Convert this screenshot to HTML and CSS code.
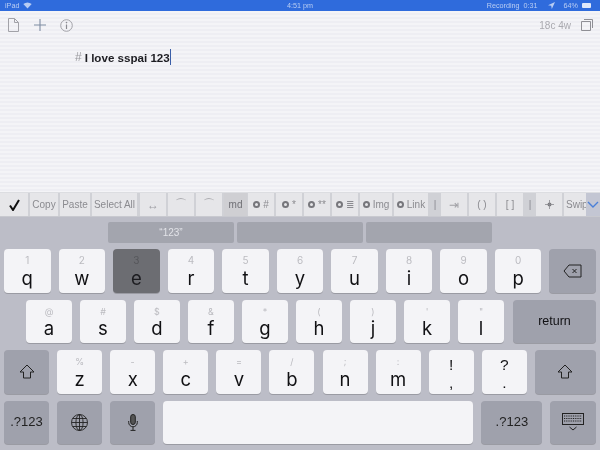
FILE: index.html
```html
<!DOCTYPE html>
<html lang="en">
  <head>
    <meta charset="UTF-8" />
    <title>Editor</title>
    <link rel="stylesheet" href="styles.css">
  </head>
  <body>
    <div id="status">
      <div class="st-left">
        <span>iPad</span>
        <svg width="9" height="7" viewBox="0 0 9 7"><path d="M4.5 6.5 L0.3 2 Q4.5 -1 8.7 2 Z" fill="#b9cdf3"/></svg>
      </div>
      <div class="st-time">4:51 pm</div>
      <div class="st-right">
        <span>Recording</span>
        <span class="st-rec">0:31</span>
        <svg class="st-loc" width="7" height="7" viewBox="0 0 7 7"><path d="M7 0 L0 3.2 L3.2 3.8 L3.8 7 Z" fill="#b9cdf3"/></svg>
        <span class="st-pct">64%</span>
        <div class="battery"></div>
      </div>
    </div>

    <div id="editor">
      <div id="topbar">
        <svg class="tool" width="11" height="14" viewBox="0 0 11 14"><path d="M0.5 0.5 H6.5 L10.5 4.5 V13.5 H0.5 Z M6.5 0.5 V4.5 H10.5" fill="none" stroke="#a2a2a8" stroke-width="1"/></svg>
        <svg class="tool tool-plus" width="12" height="12" viewBox="0 0 12 12"><path d="M6 0 V12 M0 6 H12" stroke="#7f8da3" stroke-width="1.1"/></svg>
        <svg class="tool" width="13" height="13" viewBox="0 0 13 13"><circle cx="6.5" cy="6.5" r="5.8" fill="none" stroke="#a2a2a8" stroke-width="1"/><path d="M6.5 5.5 V10" stroke="#8a8a90" stroke-width="1.2"/><circle cx="6.5" cy="3.6" r="0.8" fill="#8a8a90"/></svg>
        <div class="top-gap"></div>
        <span class="count">18c 4w</span>
        <svg width="12" height="12" viewBox="0 0 12 12"><path d="M0.5 2.5 H9.5 V11.5 H0.5 Z" fill="none" stroke="#8f8f95" stroke-width="1"/><path d="M3 0.5 H11.5 V9" fill="none" stroke="#8f8f95" stroke-width="1"/></svg>
      </div>
      <div class="line"><span class="hash">#</span><b>I love sspai 123</b><span class="caret"></span></div>
    </div>

    <div id="toolbar">
      <div class="tb w-check">
        <svg width="11" height="12" viewBox="0 0 11 12"><path d="M1 6.5 L4 11 L10 1" fill="none" stroke="#111" stroke-width="2"/></svg>
      </div>
      <div class="tb w-copy">Copy</div>
      <div class="tb w-paste">Paste</div>
      <div class="tb w-select">Select All</div>
      <div class="tb w-std faint">↔</div>
      <div class="tb w-std faint">⌒</div>
      <div class="tb w-std faint">⌒</div>
      <div class="tb w-md tb-dark">md</div>
      <div class="tb w-std"><span class="gear"></span>#</div>
      <div class="tb w-std"><span class="gear"></span>*</div>
      <div class="tb w-std"><span class="gear"></span>**</div>
      <div class="tb w-std"><span class="gear"></span>≣</div>
      <div class="tb w-img"><span class="gear"></span>Img</div>
      <div class="tb w-link"><span class="gear"></span>Link</div>
      <div class="tb w-sep">|</div>
      <div class="tb w-std faint">⇥</div>
      <div class="tb w-std">( )</div>
      <div class="tb w-std">[ ]</div>
      <div class="tb w-sep">|</div>
      <div class="tb w-std">
        <svg width="9" height="9" viewBox="0 0 9 9"><circle cx="4.5" cy="4.5" r="2" fill="#77777c"/><path d="M4.5 0 V9 M0 4.5 H9" stroke="#8b8b90" stroke-width="0.8"/></svg>
      </div>
      <div class="tb w-swipe">Swip</div>
      <div class="tb-hide">
        <svg width="12" height="7" viewBox="0 0 12 7"><path d="M1 1 L6 6 L11 1" fill="none" stroke="#4a7fd8" stroke-width="1.4"/></svg>
      </div>
    </div>

    <div id="keyboard">
      <div id="suggest">
        <div class="sug">“123”</div>
        <div class="sug"></div>
        <div class="sug"></div>
      </div>

      <div class="row">
        <div class="key"><small>1</small>q</div>
        <div class="key"><small>2</small>w</div>
        <div class="key key-on"><small>3</small>e</div>
        <div class="key"><small>4</small>r</div>
        <div class="key"><small>5</small>t</div>
        <div class="key"><small>6</small>y</div>
        <div class="key"><small>7</small>u</div>
        <div class="key"><small>8</small>i</div>
        <div class="key"><small>9</small>o</div>
        <div class="key"><small>0</small>p</div>
        <div class="key key-gray">
          <svg width="19" height="14" viewBox="0 0 19 14"><path d="M6 1 H18 V13 H6 L1 7 Z M9.5 5 L13.5 9 M13.5 5 L9.5 9" fill="none" stroke="#222" stroke-width="1"/></svg>
        </div>
      </div>

      <div class="row row-2">
        <div class="key"><small>@</small>a</div>
        <div class="key"><small>#</small>s</div>
        <div class="key"><small>$</small>d</div>
        <div class="key"><small>&amp;</small>f</div>
        <div class="key"><small>*</small>g</div>
        <div class="key"><small>(</small>h</div>
        <div class="key"><small>)</small>j</div>
        <div class="key"><small>'</small>k</div>
        <div class="key"><small>"</small>l</div>
        <div class="key key-gray key-return">return</div>
      </div>

      <div class="row row-3">
        <div class="key key-gray"><svg width="16" height="15" viewBox="0 0 16 15"><path d="M8 1 L15 8 H11.5 V14 H4.5 V8 H1 Z" fill="none" stroke="#222" stroke-width="1"/></svg></div>
        <div class="key"><small>%</small>z</div>
        <div class="key"><small>-</small>x</div>
        <div class="key"><small>+</small>c</div>
        <div class="key"><small>=</small>v</div>
        <div class="key"><small>/</small>b</div>
        <div class="key"><small>;</small>n</div>
        <div class="key"><small>:</small>m</div>
        <div class="key key-punct"><span>!</span><span>,</span></div>
        <div class="key key-punct"><span>?</span><span>.</span></div>
        <div class="key key-gray key-fill"><svg width="16" height="15" viewBox="0 0 16 15"><path d="M8 1 L15 8 H11.5 V14 H4.5 V8 H1 Z" fill="none" stroke="#222" stroke-width="1"/></svg></div>
      </div>

      <div class="row row-3">
        <div class="key key-gray key-num">.?123</div>
        <div class="key key-gray">
          <svg width="17" height="17" viewBox="0 0 17 17" fill="none" stroke="#222" stroke-width="0.9"><circle cx="8.5" cy="8.5" r="8"/><ellipse cx="8.5" cy="8.5" rx="3.6" ry="8"/><path d="M8.5 0.5 V16.5 M0.5 8.5 H16.5 M1.6 4.5 H15.4 M1.6 12.5 H15.4"/></svg>
        </div>
        <div class="key key-gray">
          <svg width="10" height="17" viewBox="0 0 10 17" fill="none" stroke="#222" stroke-width="1"><rect x="2.7" y="0.5" width="4.6" height="10" rx="2.3" fill="#555"/><path d="M0.7 7 V8.5 A4.3 4.3 0 0 0 9.3 8.5 V7 M5 13 V16 M2.5 16.4 H7.5"/></svg>
        </div>
        <div class="key key-space"></div>
        <div class="key key-gray key-num key-wide">.?123</div>
        <div class="key key-gray key-fill">
          <svg width="22" height="18" viewBox="0 0 22 18"><rect x="0.5" y="0.5" width="21" height="11" fill="none" stroke="#222" stroke-width="1"/><path d="M2 3 H20 M2 5.5 H20 M2 8 H20" stroke="#222" stroke-width="1.2" stroke-dasharray="1 0.8"/><path d="M7.5 14 L11 17 L14.5 14" fill="none" stroke="#222" stroke-width="1"/></svg>
        </div>
      </div>
    </div>
  </body>
</html>
```

FILE: styles.css
```css
* {
  box-sizing: border-box;
}
html {
  background-color: #bcbdc7;
}
html, body {
  margin: 0;
  padding: 0;
}
body {
  width: 600px;
  height: 450px;
  overflow: hidden;
  font-family: "Liberation Sans", Arial, sans-serif;
  background-color: #bcbdc7;
  filter: blur(0.35px);
}
#status {
  height: 11px;
  background-color: #2f6bdc;
  color: #b9cdf3;
  font-size: 7.2px;
  display: flex;
  align-items: center;
  justify-content: space-between;
  padding: 0 5px;
}
.st-left, .st-right {
  display: flex;
  align-items: center;
  gap: 4px;
}
.st-left {
  width: 210px;
}
.st-right {
  width: 210px;
  justify-content: flex-end;
  padding-right: 4px;
}
.st-loc {
  margin: 0 5px 0 6px;
}
.battery {
  width: 9px;
  height: 5px;
  background-color: #dfe8fa;
  border-radius: 1px;
}
#editor {
  height: 181px;
  background-color: #f2f2f6;
  background-image: repeating-linear-gradient(to bottom, #f4f4f7 0, #f4f4f7 2px, #eeeef3 2px, #eeeef3 4px);
  padding-top: 7px;
}
#topbar {
  height: 14px;
  display: flex;
  align-items: center;
  padding: 0 7px 0 8px;
}
.tool {
  margin-right: 15px;
}
.tool-plus {
  margin-right: 14px;
}
.top-gap {
  flex: 1;
}
.count {
  font-size: 10px;
  color: #a9a9af;
  margin-right: 10px;
}
.line {
  margin: 17px 0 0 75px;
  font-size: 11.6px;
  color: #1d1d22;
  display: flex;
  align-items: center;
  white-space: pre;
  height: 16px;
}
.hash {
  color: #9a9a9f;
  font-size: 12px;
  margin-right: 3px;
}
.caret {
  width: 1px;
  height: 16px;
  background-color: #3b5fa8;
}
#toolbar {
  height: 25px;
  background-color: #d0d1d6;
  border-top: 1px solid #dcdde1;
  border-bottom: 1px solid #c8c9cf;
  display: flex;
  color: #8b8b90;
  font-size: 10px;
}
.tb {
  background-color: #e6e6e9;
  margin-right: 2px;
  display: flex;
  align-items: center;
  justify-content: center;
  white-space: nowrap;
  overflow: hidden;
}
.tb-dark {
  background-color: #cfcfd3;
  margin-right: 1px;
  color: #6f6f75;
}
.w-check { width: 28px; }
.w-copy { width: 28px; }
.w-paste { width: 30px; }
.w-select { width: 45px; margin-right: 3px; }
.w-std { width: 26px; }
.w-md { width: 23px; }
.w-img { width: 32px; }
.w-link { width: 34px; }
.w-sep { width: 10px; background-color: transparent; margin-right: 1px; }
.w-swipe { width: 22px; justify-content: flex-start; padding-left: 2px; margin-right: 0; }
.faint {
  color: #a0a0a5;
  font-size: 12px;
}
.gear {
  display: inline-block;
  width: 7px;
  height: 7px;
  border: 2px solid #77777c;
  border-radius: 50%;
  margin-right: 3px;
}
.tb-hide {
  flex: 1;
  background-color: #c3c6d3;
  display: flex;
  align-items: center;
  justify-content: center;
}
#keyboard {
  padding-top: 5px;
}
#suggest {
  display: flex;
  gap: 3px;
  padding-left: 108px;
  margin-bottom: 6px;
}
.sug {
  width: 126px;
  height: 21px;
  background-color: #a3a5ae;
  border-radius: 2px;
  color: #e2e3e8;
  font-size: 10px;
  display: flex;
  align-items: center;
  justify-content: center;
}
.row {
  display: flex;
  gap: 8px;
  padding: 0 4px;
  margin-bottom: 7px;
}
.key {
  flex: 1;
  height: 43.5px;
  padding-top: 6px;
  background-color: #f4f4f7;
  border-radius: 4px;
  box-shadow: 0 1px 0 #9a9ba3;
  color: #111114;
  font-family: Inter, "Liberation Sans", sans-serif;
  font-size: 18.5px;
  line-height: 20px;
  display: flex;
  flex-direction: column;
  align-items: center;
}
.key small {
  font-size: 10px;
  line-height: 11px;
  margin-bottom: 1.5px;
  color: #bbbbc0;
}
.key-on {
  background-color: #6c6d72;
  color: #1c1c20;
}
.key-on small {
  color: #55565a;
}
.key-gray {
  background-color: #9fa1ac;
  padding-top: 0;
  justify-content: center;
}
.row-2 {
  padding-left: 26px;
}
.row-2 .key {
  flex: 0 0 46px;
}
.row-2 small, .row-3 small {
  font-size: 9px;
}
.row-2 .key-return {
  flex: 1;
  margin-left: 1px;
  font-family: "Liberation Sans", sans-serif;
  font-size: 12.5px;
}
.row-3 {
  gap: 8.1px;
}
.row-3 .key {
  flex: 0 0 45px;
}
.row-3 .key-fill {
  flex: 1;
}
.row-3 .key-space {
  flex: 0 0 310px;
}
.row-3 .key-wide {
  flex: 0 0 61px;
}
.key-num {
  font-family: "Liberation Sans", sans-serif;
  font-size: 13px;
  color: #222;
}
.key-punct {
  font-family: "Liberation Sans", sans-serif;
  font-size: 15.5px;
  line-height: 18px;
}
```
